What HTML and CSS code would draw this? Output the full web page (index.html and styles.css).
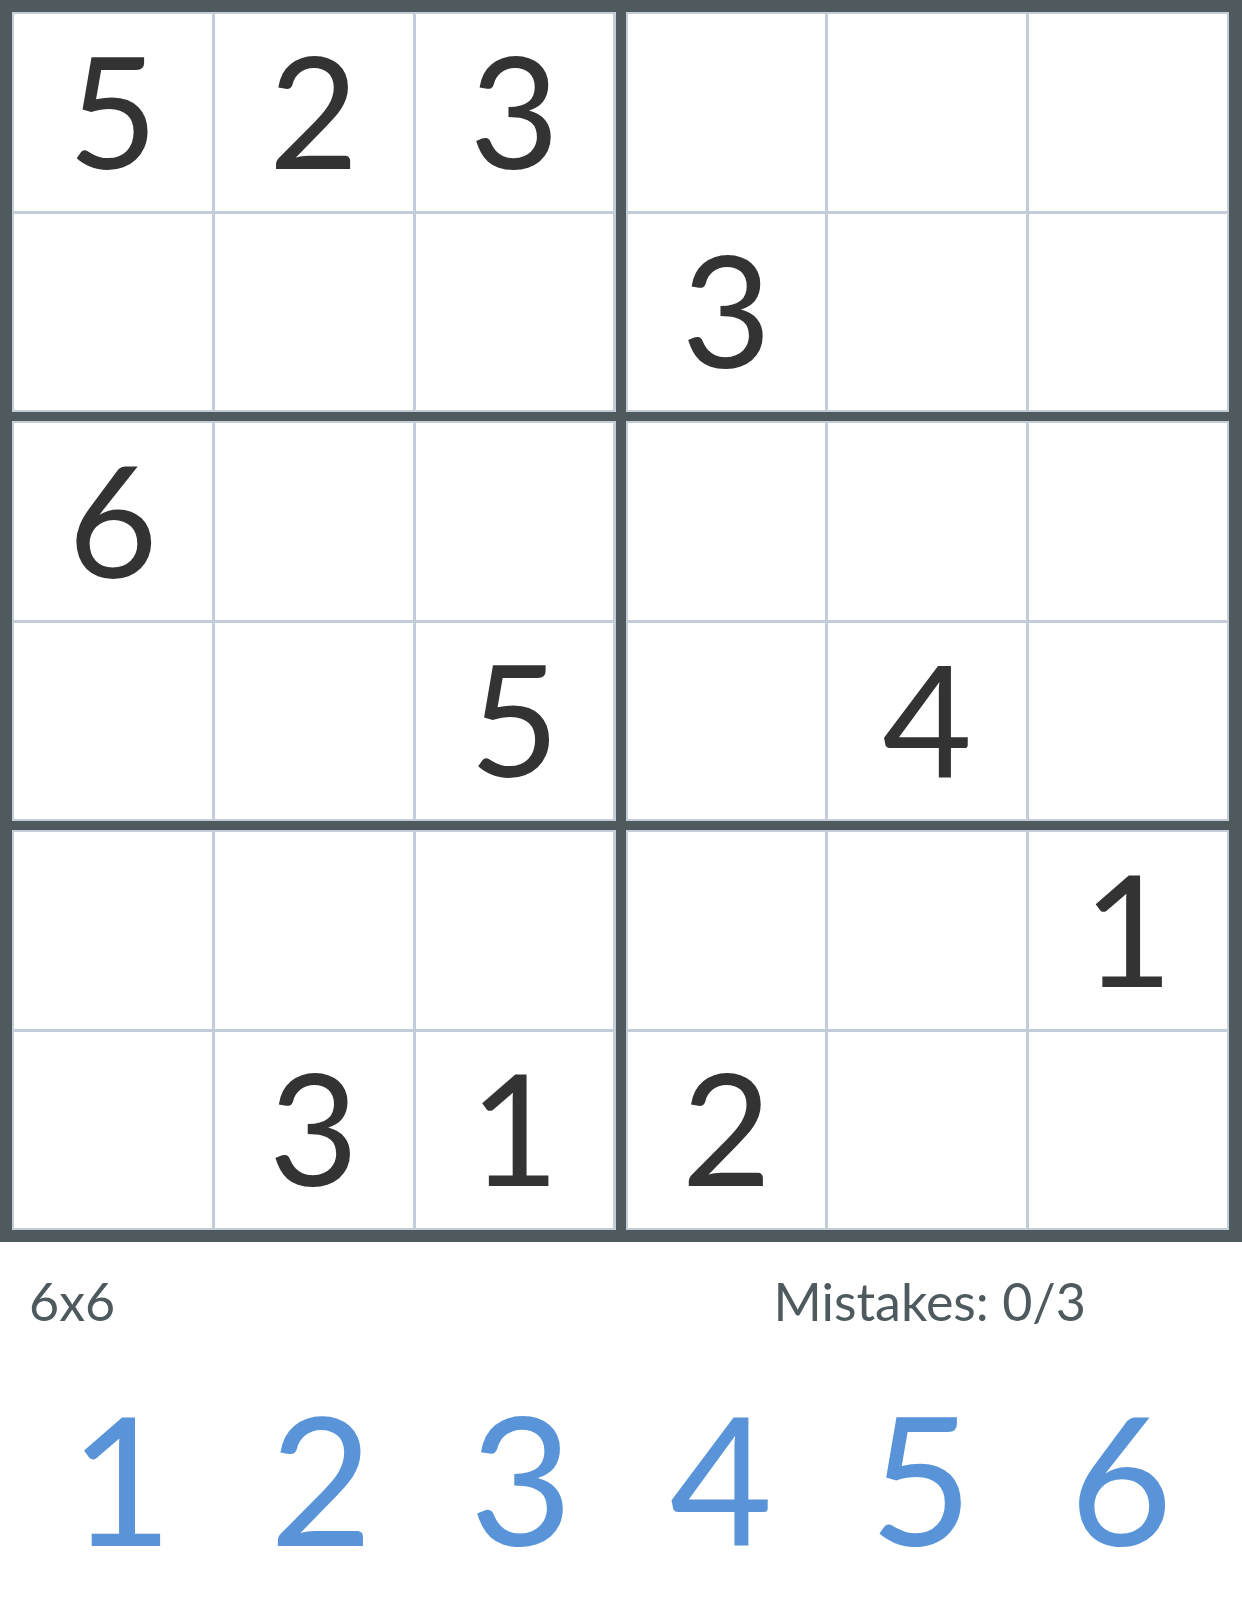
FILE: index.html
```html
<!DOCTYPE html>
<html>
<head>
<meta charset="utf-8">
<link rel="stylesheet" href="styles.css">
</head>
<body>
<div class="board">
  <div class="box">
    <div class="cell">5</div><div class="cell">2</div><div class="cell">3</div>
    <div class="cell"></div><div class="cell"></div><div class="cell"></div>
  </div>
  <div class="box">
    <div class="cell"></div><div class="cell"></div><div class="cell"></div>
    <div class="cell">3</div><div class="cell"></div><div class="cell"></div>
  </div>
  <div class="box">
    <div class="cell">6</div><div class="cell"></div><div class="cell"></div>
    <div class="cell"></div><div class="cell"></div><div class="cell">5</div>
  </div>
  <div class="box">
    <div class="cell"></div><div class="cell"></div><div class="cell"></div>
    <div class="cell"></div><div class="cell">4</div><div class="cell"></div>
  </div>
  <div class="box">
    <div class="cell"></div><div class="cell"></div><div class="cell"></div>
    <div class="cell"></div><div class="cell">3</div><div class="cell">1</div>
  </div>
  <div class="box">
    <div class="cell"></div><div class="cell"></div><div class="cell">1</div>
    <div class="cell">2</div><div class="cell"></div><div class="cell"></div>
  </div>
</div>
<div class="status">
  <span class="size">6x6</span>
  <span class="mistakes">Mistakes: 0/3</span>
</div>
<div class="pad">
  <div class="key">1</div>
  <div class="key">2</div>
  <div class="key">3</div>
  <div class="key">4</div>
  <div class="key">5</div>
  <div class="key">6</div>
</div>
</body>
</html>
```
FILE: styles.css
```css
html, body {
  margin: 0;
  padding: 0;
  background: #ffffff;
  font-family: Lato, "Open Sans", sans-serif;
}

.board {
  box-sizing: border-box;
  width: 1242px;
  height: 1242px;
  background: #4e5a5e;
  padding: 12px 13px 12px 12px;
  display: grid;
  grid-template-columns: 1fr 1fr;
  grid-template-rows: 1fr 1fr 1fr;
  column-gap: 10px;
  row-gap: 9px;
}

.box {
  background: #c2cdd9;
  padding: 2px;
  display: grid;
  grid-template-columns: 1fr 1fr 1fr;
  grid-template-rows: 1fr 1fr;
  gap: 3px;
}

.cell {
  box-sizing: border-box;
  background: #ffffff;
  display: flex;
  align-items: center;
  justify-content: center;
  padding-bottom: 6px;
  font-size: 155px;
  line-height: 1;
  color: #333333;
}

.status {
  display: flex;
  justify-content: space-between;
  align-items: center;
  padding: 0 156px 0 29px;
  height: 118px;
  font-size: 52px;
  color: #4e5a5e;
}

.pad {
  display: grid;
  grid-template-columns: repeat(6, 1fr);
  padding: 0 21px;
  margin-top: 28px;
}

.key {
  text-align: center;
  font-size: 178px;
  line-height: 1;
  color: #5a94d8;
}
```
